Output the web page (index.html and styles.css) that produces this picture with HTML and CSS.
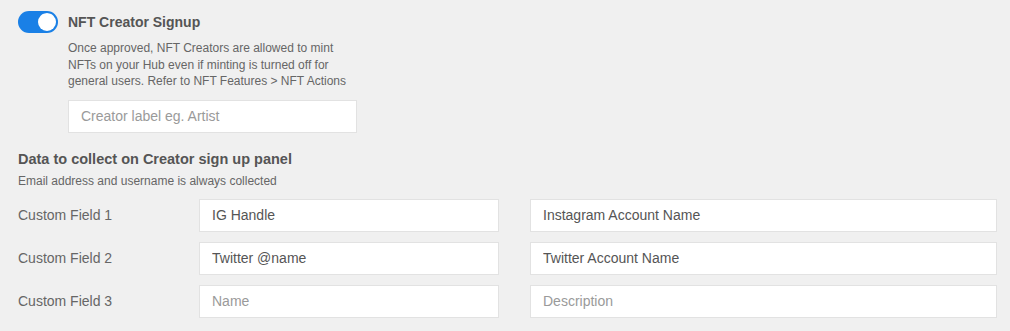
FILE: index.html
```html
<!DOCTYPE html>
<html lang="en">
<head>
    <meta charset="UTF-8">
    <title>NFT Creator Signup</title>
    <link rel="stylesheet" href="styles.css">
</head>
<body>
<div class="panel">
    <div class="signup">
        <span class="toggle on"><span class="knob"></span></span>
        <div class="signup-body">
            <div class="title">NFT Creator Signup</div>
            <p class="desc">Once approved, NFT Creators are allowed to mint<br>NFTs on your Hub even if minting is turned off for<br>general users. Refer to NFT Features &gt; NFT Actions</p>
            <input class="field label-field" placeholder="Creator label eg. Artist">
        </div>
    </div>

    <div class="title data-title">Data to collect on Creator sign up panel</div>
    <p class="note">Email address and username is always collected</p>

    <div class="fields">
        <label class="field-name">Custom Field 1</label>
        <input class="field" value="IG Handle">
        <input class="field wide" value="Instagram Account Name">

        <label class="field-name">Custom Field 2</label>
        <input class="field" value="Twitter @name">
        <input class="field wide" value="Twitter Account Name">

        <label class="field-name">Custom Field 3</label>
        <input class="field" placeholder="Name">
        <input class="field wide" placeholder="Description">
    </div>
</div>
</body>
</html>
```

FILE: styles.css
```css
html, body {
    margin: 0;
    background: #f0f0f0;
}

body {
    font-family: "Liberation Sans", Arial, sans-serif;
    color: #666;
}

.panel {
    padding: 11px 13px 0 18px;
}

.signup {
    display: flex;
    align-items: flex-start;
}

.toggle {
    flex: none;
    position: relative;
    width: 40px;
    height: 22px;
    border-radius: 11px;
    background: #1a80e6;
    margin-right: 10px;
}

.toggle .knob {
    position: absolute;
    top: 2px;
    right: 2px;
    width: 18px;
    height: 18px;
    border-radius: 50%;
    background: #fff;
}

.title {
    font-size: 14px;
    font-weight: bold;
    color: #555;
    line-height: 18px;
}

.signup .title {
    margin-top: 2px;
}

.desc {
    margin: 9px 0 0;
    font-size: 12px;
    line-height: 16.5px;
    color: #666;
}

.field {
    box-sizing: border-box;
    width: 100%;
    height: 33px;
    padding: 0 12px;
    border: 1px solid #e2e2e2;
    background: #fff;
    font-family: inherit;
    font-size: 14px;
    color: #555;
    outline: none;
}

.field::placeholder {
    color: #9a9a9a;
}

.label-field {
    display: block;
    width: 289px;
    margin-top: 10px;
}

.data-title {
    margin-top: 17px;
    font-size: 14.5px;
}

.note {
    margin: 6px 0 0;
    font-size: 12px;
    line-height: 14px;
    color: #666;
}

.fields {
    display: grid;
    grid-template-columns: 181px 300px 1fr;
    row-gap: 10px;
    align-items: center;
    margin-top: 11px;
}

.fields .wide {
    margin-left: 31px;
    width: auto;
}

.field-name {
    font-size: 14px;
    color: #666;
}
```
